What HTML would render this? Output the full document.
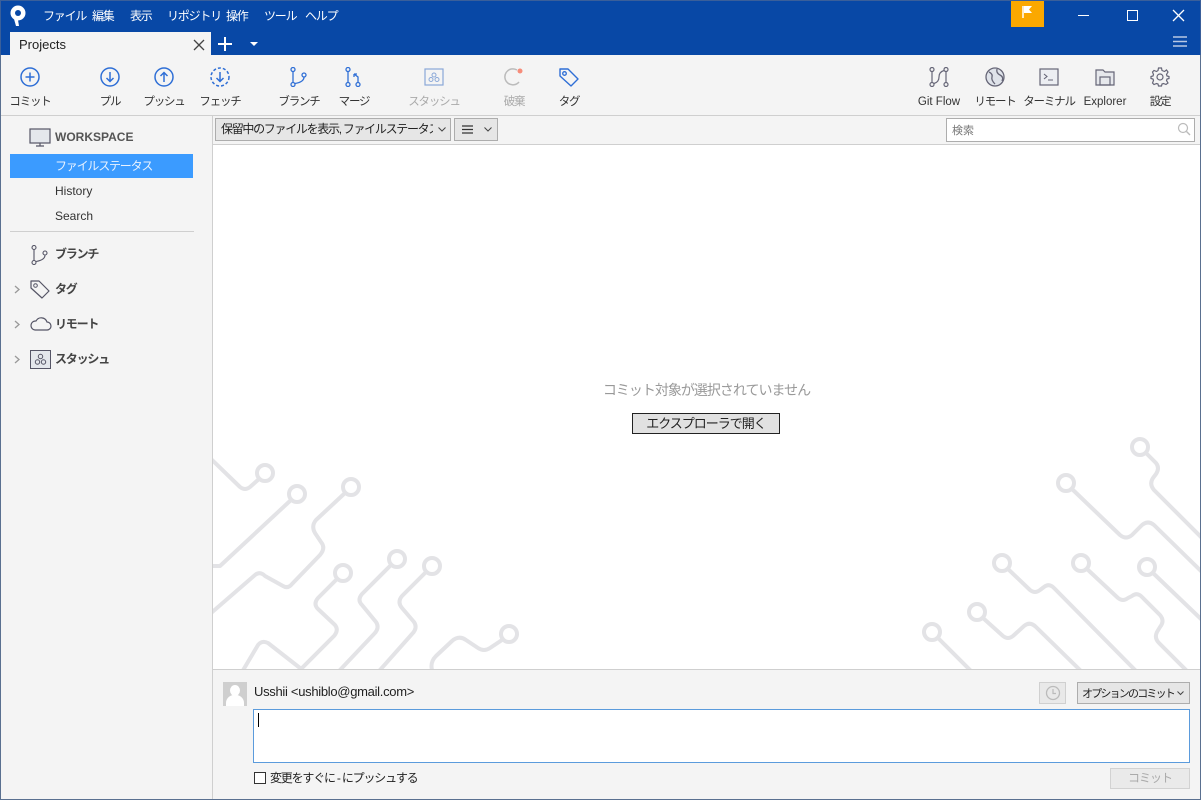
<!DOCTYPE html>
<html><head><meta charset="utf-8"><style>
*{margin:0;padding:0;box-sizing:border-box}
body{width:1201px;height:800px;overflow:hidden;position:relative;background:#f4f4f4;font-family:"Liberation Sans","Noto Sans CJK JP",sans-serif;font-size:12px;color:#222}
.abs{position:absolute;white-space:nowrap}
#title{left:0;top:0;width:1201px;height:55px;background:#0848a6;border:1px solid #3a5f9a;border-bottom:none}
.menu{color:#fff;font-size:12px;top:8px;letter-spacing:-1.2px;line-height:16px}
.tb{position:absolute;top:67px;text-align:center;font-size:11.5px;color:#333;width:60px;line-height:14px;letter-spacing:-1.2px;white-space:nowrap}
.tb.l{letter-spacing:0}
.tb svg{display:block;margin:0 auto 8px}
.side{position:absolute;font-size:12px;color:#333;line-height:15px;white-space:nowrap}
.n{letter-spacing:-1.2px}
</style></head><body>
<div id="title" class="abs"></div>
<svg class="abs" style="left:9px;top:5px" width="18" height="22" viewBox="0 0 18 22"><circle cx="9" cy="8" r="7.5" fill="#fff"/><circle cx="9" cy="8" r="3" fill="#0848a6"/><path d="M5 14 L7 21 L10 21 L9 15Z" fill="#fff"/></svg>
<div class="abs menu" style="left:43px">ファイル</div>
<div class="abs menu" style="left:92px">編集</div>
<div class="abs menu" style="left:130px">表示</div>
<div class="abs menu" style="left:167px">リポジトリ</div>
<div class="abs menu" style="left:226px">操作</div>
<div class="abs menu" style="left:264px">ツール</div>
<div class="abs menu" style="left:305px">ヘルプ</div>
<div class="abs" style="left:1011px;top:1px;width:33px;height:26px;background:#fba800"></div>
<svg class="abs" style="left:1021px;top:5px" width="14" height="14"><path d="M2 1V13" stroke="#fff" stroke-width="1.5"/><path d="M3 1H11L8 4.5L11 8H3Z" fill="#fff"/></svg>
<div class="abs" style="left:1078px;top:15px;width:11px;height:1px;background:#fff"></div>
<div class="abs" style="left:1127px;top:10px;width:11px;height:11px;border:1px solid #fff"></div>
<svg class="abs" style="left:1172px;top:9px" width="13" height="13"><path d="M1 1L12 12M12 1L1 12" stroke="#fff" stroke-width="1.3"/></svg>
<div class="abs" style="left:10px;top:32px;width:201px;height:23px;background:#f4f4f4"></div>
<div class="abs" style="left:19px;top:37px;font-size:13px;color:#222">Projects</div>
<svg class="abs" style="left:193px;top:39px" width="12" height="12"><path d="M1 1L11 11M11 1L1 11" stroke="#444" stroke-width="1.3"/></svg>
<svg class="abs" style="left:217px;top:36px" width="16" height="16"><path d="M8 1V15M1 8H15" stroke="#fff" stroke-width="2"/></svg>
<svg class="abs" style="left:250px;top:42px" width="8" height="5"><path d="M0 0H8L4 4Z" fill="#fff"/></svg>
<svg class="abs" style="left:1173px;top:35px" width="14" height="13"><path d="M0 2H14M0 6.5H14M0 11H14" stroke="#b8c8e4" stroke-width="1.6"/></svg>

<!-- toolbar -->
<div class="tb" style="left:0px"><svg width="20" height="20"><circle cx="10" cy="10" r="9" fill="none" stroke="#2f6fd6" stroke-width="1.5"/><path d="M10 5.5V14.5M5.5 10H14.5" stroke="#2f6fd6" stroke-width="1.5"/></svg>コミット</div>
<div class="tb" style="left:80px"><svg width="20" height="20"><circle cx="10" cy="10" r="9" fill="none" stroke="#2f6fd6" stroke-width="1.5"/><path d="M10 5V14M6.5 11L10 14.5L13.5 11" stroke="#2f6fd6" stroke-width="1.5" fill="none"/></svg>プル</div>
<div class="tb" style="left:134px"><svg width="20" height="20"><circle cx="10" cy="10" r="9" fill="none" stroke="#2f6fd6" stroke-width="1.5"/><path d="M10 15V6M6.5 9L10 5.5L13.5 9" stroke="#2f6fd6" stroke-width="1.5" fill="none"/></svg>プッシュ</div>
<div class="tb" style="left:190px"><svg width="20" height="20"><circle cx="10" cy="10" r="9" fill="none" stroke="#2f6fd6" stroke-width="1.5" stroke-dasharray="3 2"/><path d="M10 5V14M6.5 11L10 14.5L13.5 11" stroke="#2f6fd6" stroke-width="1.5" fill="none"/></svg>フェッチ</div>
<div class="tb" style="left:269px"><svg width="20" height="20"><circle cx="4" cy="2.5" r="2" fill="none" stroke="#2f6fd6" stroke-width="1.3"/><circle cx="4" cy="17.5" r="2" fill="none" stroke="#2f6fd6" stroke-width="1.3"/><circle cx="15" cy="8" r="2" fill="none" stroke="#2f6fd6" stroke-width="1.3"/><path d="M4 4.5V15.5M15 10Q15 15 6 16.5" stroke="#2f6fd6" stroke-width="1.3" fill="none"/></svg>ブランチ</div>
<div class="tb" style="left:324px"><svg width="20" height="20"><circle cx="4" cy="2.5" r="2" fill="none" stroke="#2f6fd6" stroke-width="1.3"/><circle cx="4" cy="17.5" r="2" fill="none" stroke="#2f6fd6" stroke-width="1.3"/><circle cx="14" cy="17.5" r="2" fill="none" stroke="#2f6fd6" stroke-width="1.3"/><path d="M4 4.5V15.5M14 15.5V10L10 7M10 7V10M10 7H13" stroke="#2f6fd6" stroke-width="1.3" fill="none"/></svg>マージ</div>
<div class="tb" style="left:404px;color:#aaa"><svg width="20" height="20"><rect x="1" y="2" width="18" height="16" fill="none" stroke="#8aa8d8" stroke-width="1.2"/><circle cx="10" cy="8" r="2" fill="none" stroke="#8aa8d8"/><circle cx="7" cy="12.5" r="2" fill="none" stroke="#8aa8d8"/><circle cx="13" cy="12.5" r="2" fill="none" stroke="#8aa8d8"/></svg>スタッシュ</div>
<div class="tb" style="left:484px;color:#aaa"><svg width="20" height="20"><path d="M15 15A8 8 0 1 1 13 3" stroke="#bbb" stroke-width="1.5" fill="none"/><circle cx="16" cy="4" r="2.5" fill="#f68c7a"/></svg>破棄</div>
<div class="tb" style="left:539px"><svg width="22" height="20"><path d="M2 2H10L20 12L13 19L2 9Z" fill="none" stroke="#2f6fd6" stroke-width="1.4" stroke-linejoin="round"/><circle cx="6.5" cy="6.5" r="1.8" fill="none" stroke="#2f6fd6" stroke-width="1.3"/></svg>タグ</div>
<div class="tb l" style="left:909px"><svg width="20" height="20"><circle cx="3" cy="2.5" r="2" fill="none" stroke="#667" stroke-width="1.2"/><circle cx="3" cy="17.5" r="2" fill="none" stroke="#667" stroke-width="1.2"/><circle cx="17" cy="2.5" r="2" fill="none" stroke="#667" stroke-width="1.2"/><circle cx="17" cy="17.5" r="2" fill="none" stroke="#667" stroke-width="1.2"/><path d="M3 4.5V15.5M17 4.5V15.5M15 3.5Q10 5 10 10T5 16.5" stroke="#667" stroke-width="1.2" fill="none"/></svg>Git Flow</div>
<div class="tb" style="left:965px"><svg width="20" height="20"><circle cx="10" cy="10" r="9" fill="#dfe3ea" stroke="#667" stroke-width="1.3"/><path d="M4 5Q8 7 7 10T10 17M12 2Q11 6 15 8T17 14" stroke="#667" stroke-width="1.3" fill="none"/></svg>リモート</div>
<div class="tb" style="left:1019px"><svg width="20" height="20"><rect x="1" y="2" width="18" height="16" fill="#eceef2" stroke="#667" stroke-width="1.2"/><path d="M5 7L8 9.5L5 12M9 13H14" stroke="#667" stroke-width="1.1" fill="none"/></svg>ターミナル</div>
<div class="tb l" style="left:1075px"><svg width="20" height="20"><path d="M1 3H8L10 5H19V18H1Z" fill="#e6e8ec" stroke="#667" stroke-width="1.2"/><rect x="5" y="10" width="10" height="8" fill="none" stroke="#667" stroke-width="1.2"/></svg>Explorer</div>
<div class="tb" style="left:1130px"><svg width="20" height="20"><circle cx="10" cy="10" r="3" fill="none" stroke="#667" stroke-width="1.2"/><path d="M8.5 1H11.5L12 3.5L14.5 4.5L16.5 3L18 5L16.5 7.5L17 9L19 9.5V11.5L17 12L16.5 13.5L18 16L16 17.5L13.5 16.5L12 17L11.5 19H8.5L8 17L6.5 16.5L4 17.5L2.5 16L3.5 13.5L3 12L1 11.5V9.5L3 9L3.5 7.5L2.5 5L4 3.5L6.5 4.5L8 3.5Z" fill="none" stroke="#667" stroke-width="1.2"/></svg>設定</div>

<div class="abs" style="left:0;top:115px;width:1201px;height:1px;background:#cfcfcf"></div>
<div class="abs" style="left:0;top:55px;width:1px;height:745px;background:#5a7090"></div>
<div class="abs" style="left:1200px;top:55px;width:1px;height:745px;background:#5a7090"></div>

<!-- sidebar -->
<svg class="abs" style="left:29px;top:128px" width="22" height="20"><rect x="1" y="1" width="20" height="14" fill="#e4e7ec" stroke="#556" stroke-width="1.2"/><path d="M7 18H15M11 15V18" stroke="#556" stroke-width="1.2"/></svg>
<div class="side" style="left:55px;top:130px;font-weight:bold;color:#555;font-size:12px">WORKSPACE</div>
<div class="abs" style="left:10px;top:154px;width:183px;height:24px;background:#3b9bff"></div>
<div class="side n" style="left:55px;top:159px;color:#e8f2ff">ファイルステータス</div>
<div class="side" style="left:55px;top:184px">History</div>
<div class="side" style="left:55px;top:209px">Search</div>
<div class="abs" style="left:10px;top:231px;width:184px;height:1px;background:#cfcfcf"></div>
<svg class="abs" style="left:31px;top:245px" width="18" height="20"><circle cx="3" cy="2.5" r="2" fill="none" stroke="#556" stroke-width="1.1"/><circle cx="3" cy="17.5" r="2" fill="none" stroke="#556" stroke-width="1.1"/><circle cx="14" cy="8" r="2" fill="none" stroke="#556" stroke-width="1.1"/><path d="M3 4.5V15.5M14 10Q14 15 5 16.5" stroke="#556" stroke-width="1.1" fill="none"/></svg>
<div class="side n" style="left:55px;top:247px;font-weight:bold;color:#444">ブランチ</div>
<svg class="abs" style="left:14px;top:285px" width="6" height="9"><path d="M1 1L5 4.5L1 8" stroke="#999" stroke-width="1.3" fill="none"/></svg>
<svg class="abs" style="left:29px;top:279px" width="22" height="22"><path d="M2 2H10L20 12L13 19L2 9Z" fill="none" stroke="#556" stroke-width="1.2" stroke-linejoin="round"/><circle cx="6.5" cy="6.5" r="1.8" fill="none" stroke="#556"/></svg>
<div class="side n" style="left:55px;top:282px;font-weight:bold;color:#444">タグ</div>
<svg class="abs" style="left:14px;top:320px" width="6" height="9"><path d="M1 1L5 4.5L1 8" stroke="#999" stroke-width="1.3" fill="none"/></svg>
<svg class="abs" style="left:30px;top:316px" width="22" height="16"><path d="M5 14H17A4 4 0 0 0 17 6A6 6 0 0 0 6 5A4.5 4.5 0 0 0 5 14Z" fill="none" stroke="#556" stroke-width="1.2"/></svg>
<div class="side n" style="left:55px;top:317px;font-weight:bold;color:#444">リモート</div>
<svg class="abs" style="left:14px;top:355px" width="6" height="9"><path d="M1 1L5 4.5L1 8" stroke="#999" stroke-width="1.3" fill="none"/></svg>
<svg class="abs" style="left:30px;top:350px" width="21" height="19"><rect x="0.5" y="0.5" width="20" height="18" fill="#e4e7ec" stroke="#556"/><circle cx="10.5" cy="6.5" r="2.2" fill="none" stroke="#556"/><circle cx="7.5" cy="12" r="2.2" fill="none" stroke="#556"/><circle cx="13.5" cy="12" r="2.2" fill="none" stroke="#556"/></svg>
<div class="side n" style="left:55px;top:352px;font-weight:bold;color:#444">スタッシュ</div>

<!-- main -->
<div class="abs" style="left:212px;top:116px;width:1px;height:684px;background:#cfcfcf"></div>
<div class="abs" style="left:215px;top:118px;width:236px;height:23px;background:#e6e6e6;border:1px solid #adadad;font-size:12px;line-height:15px;padding:3px 5px;color:#222;letter-spacing:-1.3px;overflow:hidden">保留中のファイルを表示, ファイルステータス順</div>
<div class="abs" style="left:433px;top:119px;width:17px;height:21px;background:#e6e6e6"></div>
<svg class="abs" style="left:438px;top:127px" width="8" height="5"><path d="M0.5 0.5L4 4L7.5 0.5" stroke="#444" fill="none"/></svg>
<div class="abs" style="left:454px;top:118px;width:44px;height:23px;background:#e6e6e6;border:1px solid #adadad"></div>
<svg class="abs" style="left:462px;top:125px" width="11" height="9"><path d="M0 1H11M0 4.5H11M0 8H11" stroke="#333" stroke-width="1.2"/></svg>
<svg class="abs" style="left:484px;top:127px" width="8" height="5"><path d="M0.5 0.5L4 4L7.5 0.5" stroke="#444" fill="none"/></svg>
<div class="abs" style="left:946px;top:118px;width:249px;height:24px;background:#fff;border:1px solid #adadad;font-size:11px;line-height:14px;color:#777;padding:5px 5px">検索</div>
<svg class="abs" style="left:1177px;top:122px" width="14" height="14"><circle cx="6" cy="6" r="4.5" fill="none" stroke="#bbb" stroke-width="1.2"/><path d="M9.5 9.5L13 13" stroke="#bbb" stroke-width="1.4"/></svg>
<div class="abs" style="left:213px;top:144px;width:987px;height:1px;background:#cfcfcf"></div>
<div class="abs" style="left:213px;top:145px;width:987px;height:525px;background:#fff"></div>
<svg class="abs" style="left:213px;top:145px" width="987" height="525" viewBox="213 145 987 525">
<g fill="none" stroke="#e3e3e6" stroke-width="4" stroke-linecap="round" stroke-linejoin="round">
<circle cx="265" cy="473" r="8"/><path d="M210 458L240 487Q245 491 250 487L259 479"/>
<circle cx="297" cy="494" r="8"/><path d="M210 566L220 566L291 500"/>
<circle cx="351" cy="487" r="8"/><path d="M210 614L255 575Q260 571 265 576L283 586Q288 589 292 584L320 555Q326 548 321 542L315 533Q311 526 316 520L345 493"/>
<circle cx="343" cy="573" r="8"/><path d="M337 579L318 598Q313 604 318 609L335 625Q339 630 334 636L300 670"/>
<path d="M242 672L258 645Q262 640 268 643L300 668"/>
<circle cx="397" cy="559" r="8"/><path d="M391 565L362 594Q357 600 362 605L376 622Q380 628 374 634L340 670"/>
<circle cx="432" cy="566" r="8"/><path d="M426 572L402 596Q397 602 402 608L414 622Q418 628 412 634L380 670"/>
<circle cx="509" cy="634" r="8"/><path d="M502 640L490 648Q484 652 478 648L466 640Q459 635 452 641L436 656Q430 662 432 670"/>
<circle cx="1140" cy="447" r="8"/><path d="M1146 453L1156 463Q1160 468 1156 474L1153 478Q1149 484 1154 490L1202 538"/>
<circle cx="1066" cy="483" r="8"/><path d="M1072 489L1120 535Q1126 540 1132 535L1142 525Q1148 520 1154 525L1202 572"/>
<circle cx="1002" cy="563" r="8"/><path d="M1008 569L1030 590Q1035 594 1040 590L1044 587Q1049 583 1054 588L1137 672"/>
<circle cx="1081" cy="563" r="8"/><path d="M1087 569L1118 598Q1123 602 1128 598L1132 596Q1137 592 1142 597L1160 615Q1165 621 1160 627L1157 632Q1154 638 1159 643L1188 672"/>
<circle cx="1147" cy="567" r="8"/><path d="M1153 573L1202 620"/>
<circle cx="977" cy="612" r="8"/><path d="M983 618L1003 636Q1008 640 1013 636L1024 626Q1030 621 1036 627L1082 672"/>
<circle cx="932" cy="632" r="8"/><path d="M938 638L972 672"/>
</g></svg>
<div class="abs" style="left:213px;top:381px;width:987px;text-align:center;font-size:14px;line-height:18px;color:#999;letter-spacing:-1px">コミット対象が選択されていません</div>
<div class="abs" style="left:632px;top:413px;width:148px;height:21px;background:#e1e1e1;border:1px solid #222;text-align:center;font-size:13px;line-height:19px;color:#222;letter-spacing:-1px">エクスプローラで開く</div>

<!-- bottom -->
<div class="abs" style="left:213px;top:669px;width:987px;height:1px;background:#cfcfcf"></div>
<div class="abs" style="left:213px;top:670px;width:987px;height:130px;background:#f4f4f4"></div>
<div class="abs" style="left:223px;top:682px;width:24px;height:24px;background:#cfcfcf;overflow:hidden"><div style="position:absolute;left:7px;top:3px;width:10px;height:11px;border-radius:50%;background:#fff"></div><div style="position:absolute;left:3px;top:13px;width:18px;height:14px;border-radius:8px 8px 0 0;background:#fff"></div></div>
<div class="abs" style="left:254px;top:684px;font-size:13px;line-height:16px;color:#222;letter-spacing:-0.3px">Usshii &lt;ushiblo@gmail.com&gt;</div>
<div class="abs" style="left:1039px;top:682px;width:27px;height:22px;background:#e9e9e9;border:1px solid #d0d0d0"></div>
<svg class="abs" style="left:1045px;top:685px" width="16" height="16"><circle cx="8" cy="8" r="6.5" fill="none" stroke="#bbb" stroke-width="1.3"/><path d="M8 4V8.5H11" stroke="#bbb" stroke-width="1.2" fill="none"/></svg>
<div class="abs" style="left:1077px;top:682px;width:113px;height:22px;background:#e6e6e6;border:1px solid #adadad;font-size:11px;line-height:14px;padding:4px 4px;color:#222;letter-spacing:-1.8px;overflow:hidden">オプションのコミット</div>
<svg class="abs" style="left:1177px;top:691px" width="7" height="5"><path d="M0.5 0.5L3.5 3.5L6.5 0.5" stroke="#444" fill="none"/></svg>
<div class="abs" style="left:253px;top:709px;width:937px;height:54px;background:#fff;border:1px solid #5b9bdc"></div>
<div class="abs" style="left:258px;top:713px;width:1px;height:14px;background:#000"></div>
<div class="abs" style="left:254px;top:772px;width:12px;height:12px;border:1px solid #333;background:#fff"></div>
<div class="abs" style="left:270px;top:771px;font-size:12px;line-height:15px;color:#222;letter-spacing:-1.2px">変更をすぐに - にプッシュする</div>
<div class="abs" style="left:1110px;top:768px;width:80px;height:21px;background:#eaeaea;border:1px solid #d2d2d2;text-align:center;font-size:12px;line-height:19px;color:#aaa;letter-spacing:-1px">コミット</div>
<div class="abs" style="left:0;top:799px;width:1201px;height:1px;background:#5a7090"></div>
</body></html>
